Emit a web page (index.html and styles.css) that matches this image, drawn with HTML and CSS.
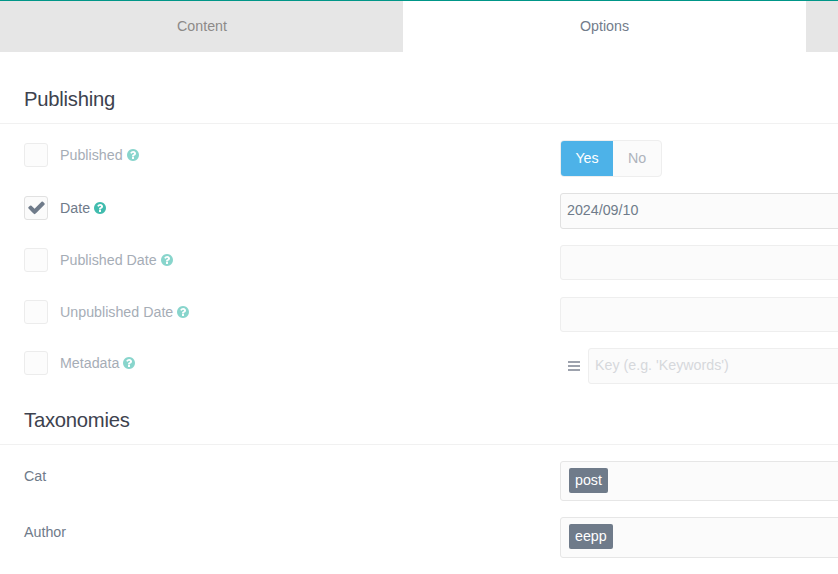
FILE: index.html
```html
<!DOCTYPE html>
<html lang="en">
<head>
<meta charset="utf-8">
<title>Options</title>
<link rel="stylesheet" href="styles.css">
</head>
<body>
<svg class="defs" width="0" height="0" aria-hidden="true">
  <symbol id="q" viewBox="0 0 1792 1792"><path d="M1024 1376v-192q0-14-9-23t-23-9h-192q-14 0-23 9t-9 23v192q0 14 9 23t23 9h192q14 0 23-9t9-23zm256-672q0-88-55.500-163t-138.500-116-170-41q-243 0-371 213-15 24 8 42l132 100q7 6 19 6 16 0 25-12 53-68 86-92 34-24 86-24 48 0 85.500 26t37.500 59q0 38-20 61t-68 45q-63 28-115.500 86.500t-52.500 125.500v36q0 14 9 23t23 9h192q14 0 23-9t9-23q0-19 21.500-49.500t54.500-49.500q32-18 49-28.500t46-35 44.500-48 28-60.500 12.500-81zm384 192q0 209-103 385.500t-279.500 279.500-385.500 103-385.500-103-279.500-279.500-103-385.500 103-385.500 279.500-279.500 385.500-103 385.500 103 279.500 279.500 103 385.500z"/></symbol>
</svg>
<nav class="tabs">
  <div class="tab tab-content">Content</div>
  <div class="tab tab-active">Options</div>
  <div class="tab tab-rest"></div>
</nav>
<main class="page">
  <section class="section">
    <h2 class="heading">Publishing</h2>
    <div class="rows">
      <div class="row row-first dim">
        <div class="left"><span class="box"></span><span class="label">Published</span><svg class="help"><use href="#q"/></svg></div>
        <div class="right"><div class="toggle"><span class="opt opt-on">Yes</span><span class="opt">No</span></div></div>
      </div>
      <div class="row">
        <div class="left"><span class="box"><svg class="check" viewBox="0 0 1792 1792"><path d="M1671 566q0-40-28-68l-136-136q-28-28-68-28t-68 28l-656 657-294-295q-28-28-68-28t-68 28l-136 136q-28 28-28 68t28 68l362 362 136 136q28 28 68 28t68-28l136-136 724-724q28-28 28-68z"/></svg></span><span class="label">Date</span><svg class="help"><use href="#q"/></svg></div>
        <div class="right"><div class="input">2024/09/10</div></div>
      </div>
      <div class="row dim">
        <div class="left"><span class="box"></span><span class="label">Published Date</span><svg class="help"><use href="#q"/></svg></div>
        <div class="right"><div class="input"></div></div>
      </div>
      <div class="row dim">
        <div class="left"><span class="box"></span><span class="label">Unpublished Date</span><svg class="help"><use href="#q"/></svg></div>
        <div class="right"><div class="input"></div></div>
      </div>
      <div class="row dim">
        <div class="left"><span class="box"></span><span class="label">Metadata</span><svg class="help"><use href="#q"/></svg></div>
        <div class="right right-meta"><svg class="bars" viewBox="0 0 12 10"><path d="M0 0h12v2H0zM0 4h12v2H0zM0 8h12v2H0z"/></svg><div class="input placeholder">Key (e.g. 'Keywords')</div></div>
      </div>
    </div>
  </section>
  <section class="section section-tax">
    <h2 class="heading">Taxonomies</h2>
    <div class="tax-rows">
      <div class="row-tax">
        <div class="left-tax">Cat</div>
        <div class="right"><div class="select"><span class="tag">post</span></div></div>
      </div>
      <div class="row-tax">
        <div class="left-tax">Author</div>
        <div class="right"><div class="select"><span class="tag">eepp</span></div></div>
      </div>
    </div>
  </section>
</main>
</body>
</html>
```
FILE: styles.css
```css
* { box-sizing: border-box; }
html, body { margin: 0; padding: 0; }
body {
  width: 838px;
  height: 574px;
  overflow: hidden;
  background: #fff;
  font-family: "Liberation Sans", Arial, sans-serif;
  font-size: 14.25px;
  color: #737c81;
}
.defs { position: absolute; }
.tabs {
  display: flex;
  height: 52px;
  border-top: 1px solid #009688;
  background: #e6e6e6;
}
.tab {
  width: 403px;
  text-align: center;
  line-height: 50px;
  color: #8d8a88;
}
.tab-content { padding-left: 1px; }
.tab-active { background: #fff; color: #737c8b; }
.tab-rest { flex: 1; }
.page { width: 838px; overflow: hidden; }
.heading {
  margin: 0;
  height: 72px;
  padding: 35px 24px 0;
  font-size: 20.25px;
  line-height: 24px;
  font-weight: 400;
  letter-spacing: -0.25px;
  color: #3d424e;
  border-bottom: 1px solid #f1f1f1;
}
.rows { padding-top: 16px; }
.row {
  display: flex;
  height: 51.92px;
  align-items: flex-start;
}
.row-first { height: 52.7px; }
.left {
  width: 560px;
  flex: none;
  display: flex;
  align-items: center;
  padding: 3px 0 0 24px;
  color: #6f7b8a;
}
.dim .left { opacity: 0.62; }
.box {
  width: 24px;
  height: 24px;
  flex: none;
  border: 1px solid #e1e1e1;
  border-radius: 3px;
  background: #fbfbfb;
  display: flex;
  align-items: center;
  justify-content: center;
}
.check { width: 19px; height: 19px; fill: #6f7b8a; }
.label { margin-left: 12px; }
.help { width: 14px; height: 14px; margin-left: 3px; fill: #41bcae; }
.right { flex: 1; min-width: 0; display: flex; }
.toggle {
  display: flex;
  height: 37px;
  border: 1px solid #eeeeee;
  border-radius: 4px;
  overflow: hidden;
  background: #fbfbfb;
}
.opt {
  width: 48px;
  line-height: 35px;
  text-align: center;
  color: #aeb3bc;
}
.opt-on { width: 52px; background: #4db2e8; color: #fff; }
.input {
  flex: 1;
  margin-right: -6px;
  height: 35.9px;
  line-height: 33px;
  padding: 0 6px;
  border: 1px solid #e1e1e1;
  border-radius: 3px;
  background: #fbfbfb;
  color: #6f7b8a;
}
.dim .input { border-color: #eeeeee; }
.right-meta { align-items: center; padding-left: 8px; }
.bars { width: 12px; height: 10px; fill: #9da2ad; margin-right: 8px; flex: none; }
.placeholder { color: #d6d8dc; }
.section-tax { margin-top: -27.4px; }
.tax-rows { padding-top: 15.9px; }
.row-tax { display: flex; height: 56.2px; align-items: flex-start; }
.left-tax {
  width: 560px;
  flex: none;
  padding: 7px 0 0 24px;
  line-height: 16px;
  color: #6f7b8a;
}
.select {
  flex: 1;
  margin-right: -6px;
  height: 40.5px;
  padding: 6px 8px;
  border: 1px solid #e6e6e6;
  border-radius: 3px;
  background: #fbfbfb;
}
.tag {
  display: block;
  width: fit-content;
  height: 25.4px;
  padding: 0 6px;
  line-height: 25px;
  border-radius: 2px;
  background: #6f7b8a;
  color: #fff;
}
```
